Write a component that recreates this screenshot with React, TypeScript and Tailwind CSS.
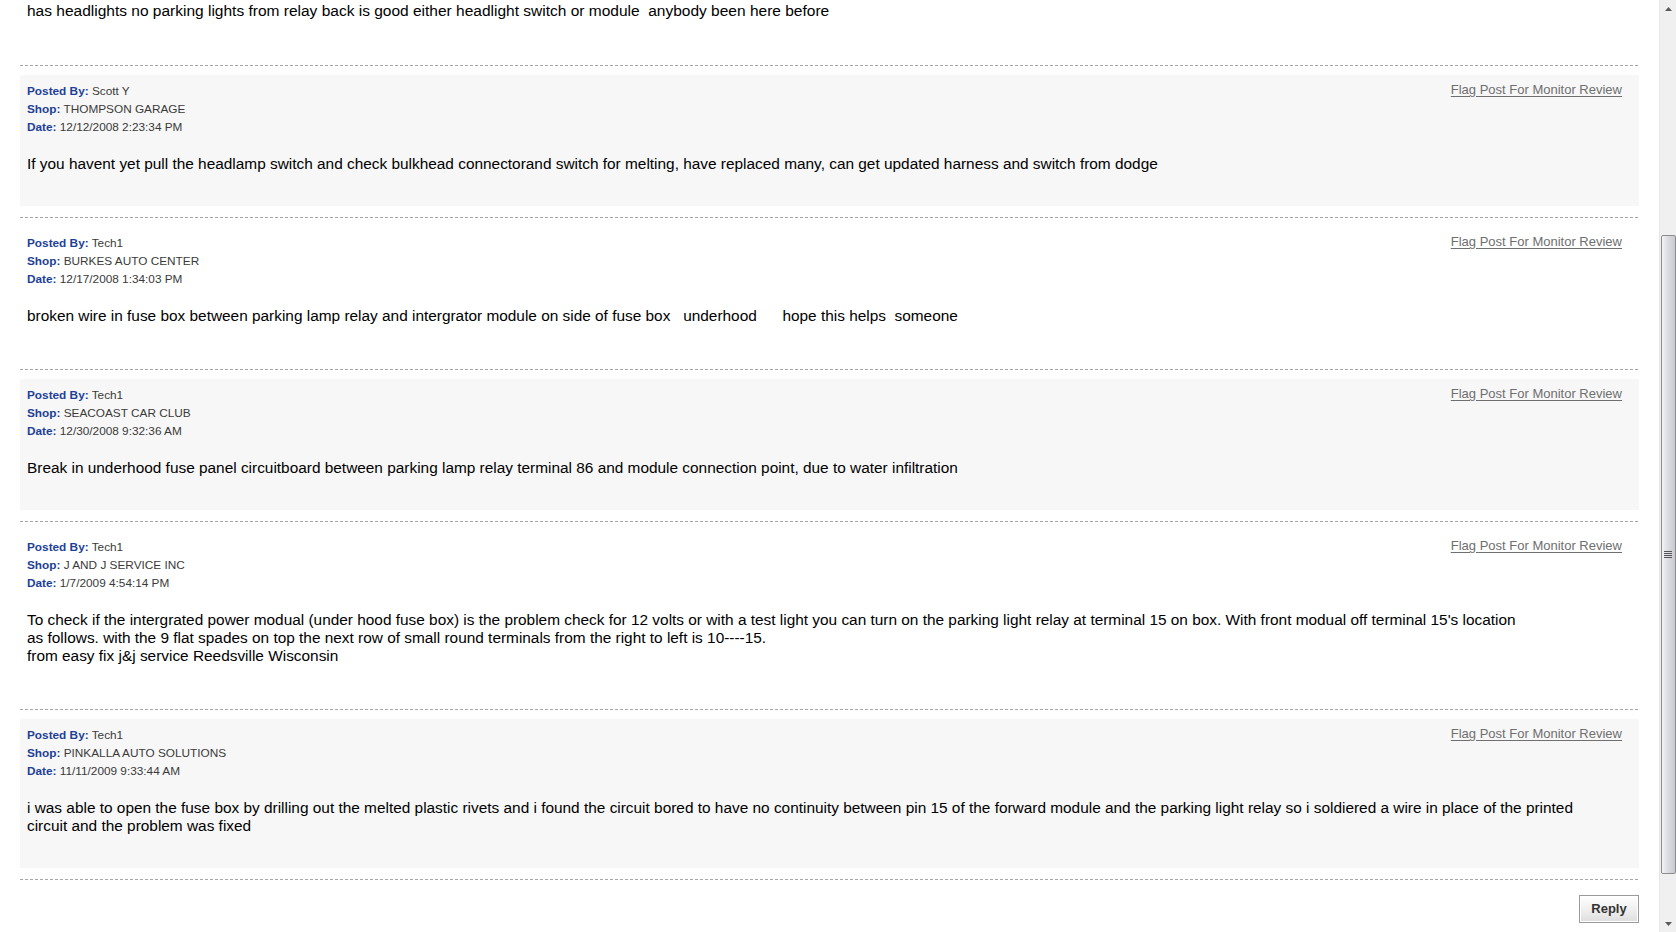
import React from "react";

type Post = {
  by: string;
  shop: string;
  date: string;
  body: string;
  shaded: boolean;
};

const posts: Post[] = [
  {
    by: "Scott Y",
    shop: "THOMPSON GARAGE",
    date: "12/12/2008 2:23:34 PM",
    body: "If you havent yet pull the headlamp switch and check bulkhead connectorand switch for melting, have replaced many, can get updated harness and switch from dodge",
    shaded: true,
  },
  {
    by: "Tech1",
    shop: "BURKES AUTO CENTER",
    date: "12/17/2008 1:34:03 PM",
    body: "broken wire in fuse box between parking lamp relay and intergrator module on side of fuse box   underhood      hope this helps  someone",
    shaded: false,
  },
  {
    by: "Tech1",
    shop: "SEACOAST CAR CLUB",
    date: "12/30/2008 9:32:36 AM",
    body: "Break in underhood fuse panel circuitboard between parking lamp relay terminal 86 and module connection point, due to water infiltration",
    shaded: true,
  },
  {
    by: "Tech1",
    shop: "J AND J SERVICE INC",
    date: "1/7/2009 4:54:14 PM",
    body: "To check if the intergrated power modual (under hood fuse box) is the problem check for 12 volts or with a test light you can turn on the parking light relay at terminal 15 on box. With front modual off terminal 15's location\nas follows. with the 9 flat spades on top the next row of small round terminals from the right to left is 10----15.\nfrom easy fix j&j service Reedsville Wisconsin",
    shaded: false,
  },
  {
    by: "Tech1",
    shop: "PINKALLA AUTO SOLUTIONS",
    date: "11/11/2009 9:33:44 AM",
    body: "i was able to open the fuse box by drilling out the melted plastic rivets and i found the circuit bored to have no continuity between pin 15 of the forward module and the parking light relay so i soldiered a wire in place of the printed\ncircuit and the problem was fixed",
    shaded: true,
  },
];

function Divider() {
  return (
    <div className="h-px bg-[repeating-linear-gradient(to_right,#a6a6a6_0px,#a6a6a6_3px,transparent_3px,transparent_5px)]" />
  );
}

function MetaLine({ label, value }: { label: string; value: string }) {
  return (
    <div className="h-[18px] leading-[18px] text-[11.8px] whitespace-nowrap">
      <span className="font-bold text-[#1d3f98]">{label}</span>{" "}
      <span className="text-[#3a3a3a]">{value}</span>
    </div>
  );
}

function PostBox({ p }: { p: Post }) {
  return (
    <div className="pt-[9px] pb-[11px]">
      <div
        className={`${p.shaded ? "bg-[#f7f7f7]" : "bg-white"} pt-[7px] pb-[33px] pl-[7px] pr-[17px]`}
      >
        <div className="flex justify-between items-start">
          <div>
            <MetaLine label="Posted By:" value={p.by} />
            <MetaLine label="Shop:" value={p.shop} />
            <MetaLine label="Date:" value={p.date} />
          </div>
          <a
            href="#"
            className="text-[13px] leading-[15px] text-[#6f6f6f] underline underline-offset-[2px]"
          >
            Flag Post For Monitor Review
          </a>
        </div>
        <div className="mt-[19px] text-[15.4px] leading-[18px] text-black whitespace-pre">
          {p.body}
        </div>
      </div>
    </div>
  );
}

function Scrollbar() {
  return (
    <div className="w-[17px] h-[932px] shrink-0 bg-[#f0f0f0] border-l border-[#e6e6e6] flex flex-col items-center">
      <div className="h-[17px] w-full flex items-center justify-center">
        <svg width="7" height="4" viewBox="0 0 7 4">
          <path d="M0 4 L3.5 0 L7 4 Z" fill="#5a5a5a" />
        </svg>
      </div>
      <div className="h-[218px]" />
      <div className="w-[15px] h-[639px] rounded-[2px] border border-[#8c8c8c] bg-[linear-gradient(to_right,#f4f4f6,#dcdce2_45%,#c9c9d1)] flex items-center justify-center">
        <svg width="8" height="7" viewBox="0 0 8 7">
          <path d="M0 0.5 H8 M0 2.5 H8 M0 4.5 H8 M0 6.5 H8" stroke="#555" strokeWidth="1" />
        </svg>
      </div>
      <div className="flex-1" />
      <div className="h-[17px] w-full flex items-center justify-center">
        <svg width="7" height="4" viewBox="0 0 7 4">
          <path d="M0 0 L3.5 4 L7 0 Z" fill="#5a5a5a" />
        </svg>
      </div>
    </div>
  );
}

export default function App() {
  return (
    <div className="w-[1676px] h-[932px] overflow-hidden flex bg-white font-['Liberation_Sans',Arial,sans-serif]">
      <div className="flex-1 min-w-0 px-[20px]">
        <div className="pt-[2px] pl-[7px] text-[15.5px] leading-[18px] text-black whitespace-pre h-[65px]">
          {"has headlights no parking lights from relay back is good either headlight switch or module  anybody been here before"}
        </div>
        {posts.map((p, i) => (
          <div key={i}>
            <Divider />
            <PostBox p={p} />
          </div>
        ))}
        <Divider />
        <div className="flex justify-end pt-[15px]">
          <button className="w-[60px] h-[28px] border border-[#9a9a9a] bg-[linear-gradient(to_bottom,#ffffff,#f0f0f0_50%,#dedede)] text-[13px] font-bold text-[#333] shadow-[inset_0_0_0_1px_#fff]">
            Reply
          </button>
        </div>
      </div>
      <Scrollbar />
    </div>
  );
}
